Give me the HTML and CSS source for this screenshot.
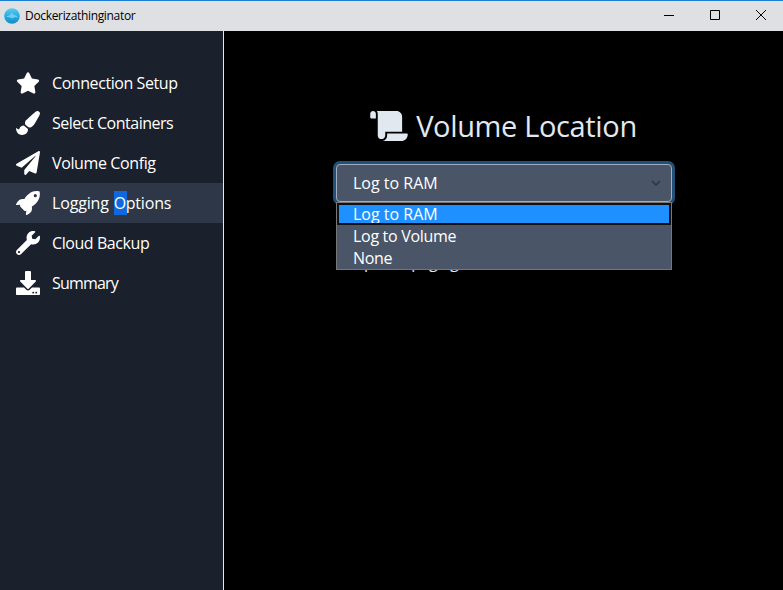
FILE: index.html
```html
<!DOCTYPE html>
<html lang="en">
<head>
<meta charset="utf-8">
<title>Dockerizathinginator</title>
<link rel="stylesheet" href="styles.css">
</head>
<body>
<header class="titlebar">
  <svg class="logo" viewBox="0 0 16 16"><defs><linearGradient id="sea" x2="0" y2="1"><stop stop-color="#65cbed"/><stop offset=".5" stop-color="#20aee5"/><stop offset="1" stop-color="#168bc5"/></linearGradient></defs><circle cx="8" cy="8" r="7.8" fill="url(#sea)"/><path fill="#6fcdf0" d="M2 8.500l3-1 3-3 1.500 2L13 8l1 1.500-3-.5-2.500 1.500-2.500-1z"/></svg>
  <span class="app-name">Dockerizathinginator</span>
  <div class="controls">
    <svg viewBox="0 0 46 30"><path d="M12 14.500h10"/></svg>
    <svg viewBox="0 0 46 30"><path d="M12.500 9.500h9v9h-9z"/></svg>
    <svg viewBox="0 0 46 30"><path d="M12 9l10 10M22 9L12 19"/></svg>
  </div>
</header>
<div class="shell">
  <nav class="sidebar">
    <a class="item"><svg viewBox="0 0 576 512"><path d="M259.300 17.800L194 150.200 47.900 171.500c-26.200 3.800-36.700 36.100-17.700 54.600l105.700 103-25 145.500c-4.500 26.300 23.200 46 46.400 33.700L288 439.600l130.700 68.700c23.200 12.200 50.900-7.400 46.400-33.700l-25-145.500 105.700-103c19-18.500 8.500-50.800-17.700-54.600L382 150.200 316.700 17.800c-11.700-23.600-45.600-23.900-57.400 0z"/></svg><span class="connection">Connection Setup</span></a>
    <a class="item"><svg viewBox="0 0 512 512"><path d="M167.020 309.340c-40.120 2.580-76.530 17.860-97.190 72.300-2.350 6.210-8 9.980-14.590 9.980-11.110 0-45.460-27.670-55.250-34.350C0 439.620 37.930 512 128 512c75.860 0 128-43.770 128-120.190 0-3.110-.65-6.080-.97-9.130l-88.010-73.340zM457.890 0c-15.160 0-29.370 6.710-40.210 16.450C213.270 199.050 192 203.340 192 257.090c0 13.700 3.250 26.760 8.730 38.700l63.820 53.180c7.210 1.800 14.640 3.030 22.390 3.030 62.110 0 98.110-45.470 211.160-256.460 7.380-14.350 13.900-29.850 13.900-45.990C512 20.640 486 0 457.890 0z"/></svg><span class="containers">Select Containers</span></a>
    <a class="item"><svg viewBox="0 0 512 512"><path d="M476 3.200L12.500 270.600c-18.100 10.400-15.800 35.600 2.200 43.200L121 358.400l287.300-253.200c5.500-4.900 13.300 2.600 8.600 8.300L176 407v80.500c0 23.600 28.500 32.900 42.500 15.800L282 426l124.600 52.200c14.200 6 30.400-2.900 33-18.200l72-432C515 7.800 493.300-6.800 476 3.200z"/></svg><span class="volume">Volume Config</span></a>
    <a class="item active"><svg viewBox="0 0 24 24"><path fill-rule="evenodd" d="M23.600.4C18.500-.5 15.500.9 12.500 3.200 10.700 4.600 9.300 6.200 8.400 8 6.500 7.800 4.800 7.900 3.600 8.700 2 9.900.9 11.500.1 13.200c-.3.700.1 1 .7.900l3.500-.4c-.4 1.100-.4 1.600.1 2.100l3.900 3.900c.5.500 1.100.5 2 .1l-.4 3.500c0 .6.300.9.900.6 1.800-.8 3.500-1.900 4.500-3.500.8-1.300.8-3 .5-4.900 1.800-.9 3.500-2.200 4.900-4C23.100 8.500 24.400 5.500 23.600.4zM19.300 3.100a1.600 1.600 0 1 1 0 3.200 1.600 1.600 0 0 1 0-3.200z"/></svg><span class="logging">Logging <mark>O</mark>ptions</span></a>
    <a class="item"><svg viewBox="0 0 512 512"><path d="M507.730 109.100c-2.240-9.030-13.540-12.090-20.120-5.510l-74.360 74.360-67.880-11.310-11.310-67.880 74.360-74.360c6.620-6.620 3.430-17.900-5.660-20.160-47.380-11.740-99.550.91-136.580 37.930-39.640 39.640-50.550 97.100-34.050 147.200L18.740 402.760c-24.990 24.990-24.990 65.510 0 90.500 24.990 24.990 65.510 24.990 90.500 0l213.210-213.210c50.120 16.710 107.470 5.680 147.370-34.220 37.070-37.070 49.700-89.320 37.910-136.730zM64 472c-13.250 0-24-10.750-24-24 0-13.260 10.750-24 24-24s24 10.740 24 24c0 13.250-10.750 24-24 24z"/></svg><span class="backup">Cloud Backup</span></a>
    <a class="item"><svg viewBox="0 0 512 512"><path d="M216 0h80c13.300 0 24 10.700 24 24v168h87.700c17.800 0 26.700 21.500 14.100 34.100L269.700 378.300c-7.500 7.500-19.800 7.500-27.300 0L90.100 226.100c-12.600-12.600-3.700-34.100 14.100-34.100H192V24c0-13.300 10.700-24 24-24zm296 376v112c0 13.300-10.700 24-24 24H24c-13.300 0-24-10.700-24-24V376c0-13.300 10.700-24 24-24h146.700l49 49c20.100 20.100 52.500 20.100 72.600 0l49-49H488c13.300 0 24 10.700 24 24zm-124 88c0-11-9-20-20-20s-20 9-20 20 9 20 20 20 20-9 20-20zm64 0c0-11-9-20-20-20s-20 9-20 20 9 20 20 20 20-9 20-20z"/></svg><span class="summary">Summary</span></a>
  </nav>
  <main class="content">
    <h1 class="heading"><svg viewBox="0 0 640 512"><path d="M48 0C21.530 0 0 21.530 0 48v64c0 8.840 7.160 16 16 16h80V48C96 21.530 74.470 0 48 0zm208 412.570V352h288V96c0-52.940-43.060-96-96-96H111.590C121.740 13.410 128 29.920 128 48v368c0 38.870 34.650 69.650 74.750 63.120C234.220 474 256 444.460 256 412.570zM288 384v32c0 52.930-43.060 96-96 96h336c61.860 0 112-50.140 112-112 0-8.840-7.160-16-16-16H288z"/></svg><span>Volume Location</span></h1>
    <div class="field">
      <div class="select"><span>Log to RAM</span><svg viewBox="0 0 10 6"><path d="M1 1l4 4 4-4"/></svg></div>
      <div class="menu">
        <div class="option chosen"><span>Log to RAM</span></div>
        <div class="option"><span class="to-volume">Log to Volume</span></div>
        <div class="option"><span class="none">None</span></div>
      </div>
    </div>
    <p class="note">Options paging</p>
  </main>
</div>
</body>
</html>
```
FILE: styles.css
```css
* { box-sizing: border-box; }
body { margin: 0; width: 783px; height: 590px; overflow: hidden; background: #000; font: 16px/24px "Open Sans", "Noto Sans", sans-serif; color: #fff; }
.titlebar { height: 31px; border-top: 1px solid #1b80d5; background: #dfe0e4; display: flex; align-items: center; padding-left: 4px; color: #000; }
.logo { width: 16px; height: 16px; margin-right: 5px; }
.app-name { font-size: 12px; letter-spacing: -.33px; line-height: 16px; }
.controls { margin-left: auto; margin-right: -7px; display: flex; }
.controls svg { width: 46px; height: 30px; fill: none; stroke: #000; stroke-width: 1; }
.shell { display: flex; height: 559px; }
.sidebar { width: 224px; padding-top: 32px; background: #1a202c; border-right: 1px solid #e2e8f0; }
.item { display: flex; align-items: center; height: 40px; padding-left: 16px; }
.item svg { width: 24px; height: 24px; fill: #fff; margin-right: 12px; }
.item span { white-space: nowrap; }
.connection, .backup { letter-spacing: -.43px; }
.containers { letter-spacing: -.48px; }
.volume { letter-spacing: -.38px; }
.logging { letter-spacing: -.17px; word-spacing: 1px; }
.summary { letter-spacing: -.8px; }
.active { background: #2d3748; }
mark { display: inline-block; width: 13px; height: 24px; margin-right: -1px; background: #1068de; color: inherit; }
.content { flex: 1; padding: 71px 109px 0 112px; }
.heading { margin: 0 3px 14px 0; height: 48px; display: flex; align-items: center; justify-content: center; color: #e2e8f0; font-size: 29px; letter-spacing: -.35px; font-weight: 400; line-height: 48px; white-space: nowrap; }
.heading svg { width: 38px; height: 30px; fill: currentColor; margin-right: 8px; }
.field { position: relative; width: 336px; }
.select { height: 38px; padding: 0 10px 0 16px; display: flex; align-items: center; justify-content: space-between; background: #4a5568; border: 1px solid #a0aec0; border-radius: 4px; box-shadow: 0 0 0 3px #225078; }
.select svg { width: 10px; height: 6px; fill: none; stroke: #2d3748; stroke-width: 1.7; }
.menu { position: absolute; top: 38px; left: 0; width: 336px; height: 68px; border: 1px solid #777; background: #4a5568; }
.option { height: 22px; line-height: 22px; padding-left: 16px; }
.chosen { background: #1e90ff; border: 2px solid #111; padding-left: 14px; line-height: 18px; overflow: hidden; }
.to-volume { letter-spacing: -.3px; }
.none { letter-spacing: -.3px; }
.note { margin: 48px 0 0 16px; color: #e2e8f0; letter-spacing: -.5px; }
```
